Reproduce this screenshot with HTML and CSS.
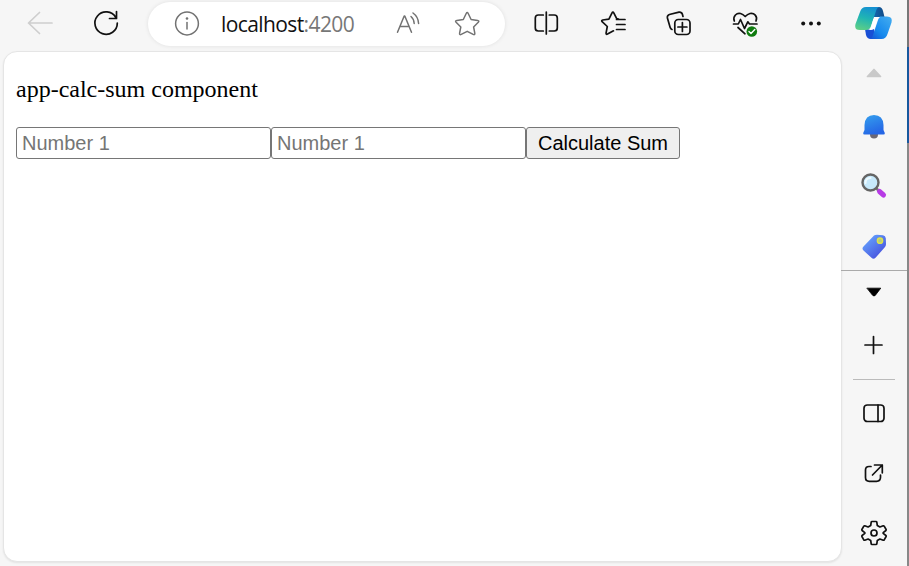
FILE: index.html
```html
<!DOCTYPE html>
<html lang="en">
<head>
<meta charset="utf-8">
<title>localhost:4200</title>
<link rel="stylesheet" href="styles.css">
</head>
<body>
<div class="browser">
  <div class="main">
    <header class="toolbar">
      <svg class="icon back" viewBox="0 0 32 32"><path d="M28 15H4.500M15.500 4.500 4.500 15 15.500 25.500"/></svg>
      <svg class="icon reload" viewBox="0 0 32 32"><path d="M25.800 9.500A11.200 11.200 0 1 0 27.300 15M26.500 3.500v7h-7"/></svg>
      <div class="omnibox">
        <svg class="icon" viewBox="0 0 32 32"><circle cx="16" cy="15.500" r="11.400"/><path d="M16 14.500v6.500"/><circle class="dot" cx="16" cy="10.500" r="1.300"/></svg>
        <span class="url">localhost<span class="port">:4200</span></span>
        <svg class="icon read" viewBox="0 0 32 32"><path d="M5.500 24.200 12.200 8h.6l6.700 16.200M8 18.500h9M19 8.500c2 1.700 3 3.800 3.200 7M21 5c3.500 2.500 5.400 6 5.600 10.500"/></svg>
        <svg class="icon star" viewBox="0 0 32 32"><path d="M15.200 5.500q1-2 2 0l2.900 6 6.500.9q2 .4.700 1.900l-4.700 4.700 1.200 6.200q.2 2-1.600 1.200l-6-3.100-6 3.100q-1.800.8-1.600-1.200l1.200-6.200-4.700-4.700q-1.300-1.500.7-1.900l6.500-.9z"/></svg>
      </div>
      <svg class="icon tool" viewBox="0 0 32 32"><path d="M12.300 7h-5q-3 0-3 3v10q0 3 3 3h5M18.300 7h5q3 0 3 3v10q0 3-3 3h-5M15.300 4v22"/></svg>
      <svg class="icon tool" viewBox="0 0 32 32"><path d="m16.500 22.800-6 3.300q-1.600.8-1.400-1.300l1.200-6.300-5.200-4.800q-1-1.300.6-1.700l6.200-.9 3-6q1-1.800 2 0l2.800 5.500 1.800.4M19.500 11.500h8.500M19.500 16.500h8.500M19.500 21.500h8.500"/></svg>
      <svg class="icon tool" viewBox="0 0 32 32"><path d="M9 21.500Q7.500 21 7.100 19.200L4.400 10q-.5-2.700 2-3.500L16 4.100q2.700-.3 3.400 2.200l.6 2.200"/><rect x="11.800" y="11.500" width="15.200" height="15" rx="3.500"/><path d="M19.400 14.500v9M14.900 19h9"/></svg>
      <svg class="icon tool" viewBox="0 0 32 32"><path d="M5.300 13C3.500 8 8 4.500 11.500 5.500q2.500.7 4.700 3Q18.500 6.100 21 5.500c4-.8 8 2.500 6 7.500M4.500 16h4.800l2.200-4.500 4 9 3.300-6.700 1.700 2.200H28M9 19.500l7 6.300"/><circle class="ok" cx="22.800" cy="23.500" r="5.300"/><path class="check" d="m20 23.500 2 2 3.800-4"/></svg>
      <svg class="icon tool" viewBox="0 0 32 32"><g class="dot"><circle cx="8.200" cy="15.500" r="2"/><circle cx="16" cy="15.500" r="2"/><circle cx="23.800" cy="15.500" r="2"/></g></svg>
    </header>
    <main class="page">
      <p class="title">app-calc-sum component</p>
      <div class="form"><input class="number" type="text" placeholder="Number 1"><input class="number" type="text" placeholder="Number 1"><button class="calc" type="button">Calculate Sum</button></div>
    </main>
  </div>
  <aside class="sidebar">
    <svg class="copilot" viewBox="0 0 38 36">
      <defs>
        <linearGradient id="leaf" x1=".6" y1="0" x2=".3" y2="1"><stop offset="0" stop-color="#1590d2"/><stop offset=".5" stop-color="#20b5b3"/><stop offset="1" stop-color="#5cce87"/></linearGradient>
        <linearGradient id="blue" x1="1" y1="0" x2="0" y2="1"><stop offset="0" stop-color="#45aef0"/><stop offset=".6" stop-color="#1689ed"/><stop offset="1" stop-color="#1749cf"/></linearGradient>
        <linearGradient id="fold" x1="0" y1="0" x2="1" y2="0"><stop offset="0" stop-color="#126dba"/><stop offset="1" stop-color="#124b86"/></linearGradient>
      </defs>
      <path fill="url(#fold)" d="M17 2h7q3 0 4 4l1.500 6H24q-3 0-4 2l-4-1z"/>
      <path fill="#194fd5" d="M10 24h9l2 10h-5q-4 0-5-4z"/>
      <path fill="url(#leaf)" d="M11 2h14q-3 0-4 4l-5 15q-1 4-5 4H5q-6 0-4.500-6L5 7q1.500-5 6-5z"/>
      <path fill="url(#blue)" d="M25 11.500h7q6 0 4.500 6l-4 11.500q-1.500 5-6 5H13q4 0 5-4l5-15q1-3.500 2-3.500z"/>
      <path fill="#fff" d="M19 12h6q-2 1-3 4l-2 6q-1 3-4 3h-4q3 0 4-3z"/>
    </svg>
    <svg class="icon" viewBox="0 0 32 32"><path class="up" d="m9.500 19.500 6.500-7 6.500 7z"/></svg>
    <svg class="icon art" viewBox="0 0 32 32">
      <defs><linearGradient id="bell" x1="0" y1="0" x2=".4" y2="1"><stop stop-color="#35a1ee"/><stop offset="1" stop-color="#2566e5"/></linearGradient></defs>
      <circle cx="16" cy="23.500" r="4" fill="#6b6774"/>
      <path fill="url(#bell)" d="M16 4q9 0 9.500 10v5l1.300 3q.3 1.500-1.300 1.500h-19q-1.600 0-1.300-1.500l1.300-3v-5Q7 4 16 4z"/>
    </svg>
    <svg class="icon art" viewBox="0 0 32 32">
      <path d="m19 19 3 3" stroke="#777" stroke-width="2.500"/><path d="m21.500 21.500 4 3.500" stroke="#b73be5" stroke-width="5" stroke-linecap="round"/>
      <circle cx="12.500" cy="12.500" r="8" fill="#c7e9fb" stroke="#656565" stroke-width="2.400"/><path d="M7.500 13q0-5 5-5" stroke="#eefaff" stroke-width="2" fill="none"/>
    </svg>
    <svg class="icon art tag" viewBox="0 0 32 32">
      <defs><linearGradient id="tag" x1=".2" y1=".2" x2=".8" y2=".9"><stop stop-color="#629bfa"/><stop offset="1" stop-color="#4751dd"/></linearGradient></defs>
      <path fill="url(#tag)" d="M16 4.500q1-.7 3-.7l6 .4q2.500.3 2.800 3l.2 6q0 2-1.400 3.300L17.500 26.800q-2 1.700-4 0l-8-7.300q-2-2 0-4z"/><circle cx="22" cy="9.700" r="2.600" fill="#b5cd82" stroke="#dfe34b" stroke-width="1.500"/>
    </svg>
    <svg class="icon split" viewBox="0 0 32 32"><path class="down" d="M9 11.500h14L17.300 19q-1.300 1.300-2.600 0z"/></svg>
    <svg class="icon" viewBox="0 0 32 32"><path d="M15.500 7.500v17M7 16h17"/></svg>
    <div class="rule"></div>
    <svg class="icon" viewBox="0 0 32 32"><rect x="6" y="8" width="20" height="16.500" rx="3.300"/><path d="M20 8v16.500"/></svg>
    <svg class="icon" viewBox="0 0 32 32"><path d="M13 9.500h-2q-3.500 0-3.500 3.500v7.500q0 3.800 3.800 3.800h7.200q4 0 4-4V18M16.500 8h7.800v7.800M24.300 8 14.500 18"/></svg>
    <svg class="icon gear" viewBox="0 0 32 32"><path d="M14 4.500h4q.7 0 .8.700l.5 3.300 2.600 1.500 3.300-1.200q.7-.2 1 .4l1.900 3.300q.3.600-.2 1L25.200 15.600v.8l2.700 2.100q.5.400.2 1l-1.900 3.300q-.3.600-1 .4L21.900 22l-2.600 1.500-.5 3.300q-.1.700-.8.700h-4q-.7 0-.8-.7l-.5-3.300L10.100 22l-3.300 1.200q-.7.200-1-.4l-1.900-3.300q-.3-.6.200-1l2.700-2.100v-.8l-2.700-2.100q-.5-.4-.2-1l1.900-3.300q.3-.6 1-.4l3.300 1.200 2.600-1.500.5-3.300q.1-.7.800-.7z"/><circle cx="16" cy="16" r="3"/></svg>
  </aside>
  <div class="edge"><span class="edge-top"></span><span class="edge-blue"></span></div>
</div>
</body>
</html>
```
FILE: styles.css
```css
* { box-sizing: border-box; }
body { margin: 0; background: #f6f6f6; overflow: hidden; }
.browser { display: grid; grid-template-columns: 841px 66px 2px; height: 566px; background: #f6f6f6; }
.main { display: grid; grid-template-rows: 51px 511px; padding-left: 3px; }
.toolbar { display: flex; align-items: center; gap: 34px; height: 46px; padding: 1px 0 0 21px; }
.icon { display: block; flex: none; width: 32px; height: 32px; fill: none; stroke: #111; stroke-width: 1.7; stroke-linecap: round; stroke-linejoin: round; }
.back { stroke: #cecece; }
.dot { fill: #111; stroke: none; }
.omnibox { display: flex; align-items: center; width: 357px; height: 44px; margin: 1px -8px 0 -8px; padding-left: 23px; border-radius: 22px; background: #fff; box-shadow: 0 0 4px #00000018; }
.omnibox .icon { stroke: #727272; stroke-width: 1.5; }
.omnibox .dot { fill: #727272; stroke: none; }
.url { width: 170px; margin-left: 18px; font: 21px/30px "Open Sans", sans-serif; letter-spacing: -.6px; color: #111; white-space: nowrap; }
.port { color: #777; }
.read { margin: 0 27px 0 1px; }
.ok { fill: #107c10; stroke: none; }
.check { stroke: #fff; stroke-width: 1.4; }
.page { width: 839px; padding: 23px 12px; border: 1px solid #e5e5e5; border-radius: 14px; background: #fff; box-shadow: 0 1px 2px #00000014; }
.title { margin: 0 0 24px; font: 24px/28px "Liberation Serif", serif; color: #000; }
.form { display: flex; }
.number { width: 255px; height: 32px; padding: 1px 5px; border: 1px solid #767676; border-radius: 3px; background: #fff; font: 20px "Liberation Sans", sans-serif; }
.number::placeholder { color: #757575; }
.calc { width: 154px; height: 32px; padding: 0; border: 1px solid #767676; border-radius: 3px; background: #efefef; font: 20px "Liberation Sans", sans-serif; color: #000; }
.sidebar { display: grid; grid-template-rows: 46px 54px 54px 64px 52px 44px 62px 7px 60px 60px 60px; place-items: center; }
.copilot { width: 38px; height: 36px; }
.art { stroke: none; }
.up { fill: #c9c9c9; stroke: #c9c9c9; }
.tag { margin-top: 6px; }
.split { width: 66px; height: 44px; padding: 6px 0; border-top: 1px solid #aaa; }
.down { fill: #000; stroke: #000; stroke-width: .8; }
.rule { width: 42px; height: 1px; background: #bbb; }
.edge { display: grid; grid-template-rows: 47px 96px; background: #888; }
.edge-top { background: #777; }
.edge-blue { background: #17589e; }
```
